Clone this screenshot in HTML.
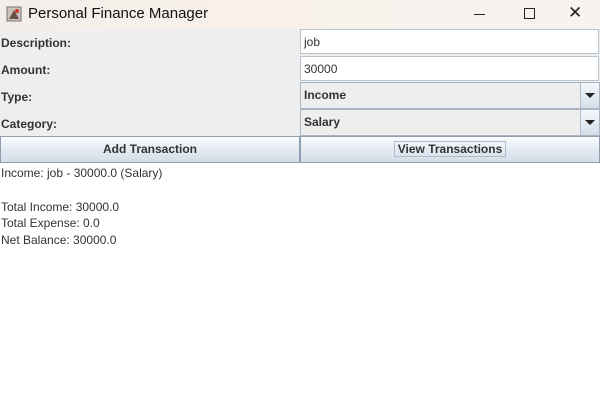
<!DOCTYPE html>
<html><head><style>
body{margin:0;width:600px;height:401px;overflow:hidden;background:#fff;font-family:"Liberation Sans",sans-serif;position:relative}
.a{position:absolute}
.tb{left:0;top:0;width:600px;height:29px;background:linear-gradient(90deg,#f3eeea,#f8f1ea 40%,#f6f3f0)}
.lab{font-weight:bold;font-size:12px;color:#333;left:1px}
.tf{background:#fff;border:1px solid #b8c4d0;left:300px;width:299px;font-size:12px;color:#333;box-sizing:border-box;padding-left:3px}
.cb{left:300px;width:300px;box-sizing:border-box;border:1px solid #a8b6c4;background:#eee;font-weight:bold;font-size:12px;color:#333}
.arr{position:absolute;right:0;top:0;width:18px;height:100%;background:linear-gradient(#f4f7fa,#d5dfe9);border-left:1px solid #b0bccb}
.arr:after{content:"";position:absolute;left:4px;top:10px;border:5px solid transparent;border-top:5px solid #222;border-bottom:0}
.btn{top:136px;height:27px;box-sizing:border-box;border:1px solid #8d9eb0;background:linear-gradient(#fbfcfd,#e4ebf2 50%,#d2dde8);font-weight:bold;font-size:12px;color:#333;text-align:center;line-height:25px}
.t{font-size:12px;color:#333;left:1px}
</style></head><body>
<div class="a tb"></div>
<svg class="a" style="left:6px;top:6px" width="16" height="16"><rect x="1" y="1" width="14" height="14" fill="#c9c2bd" stroke="#777"/><path d="M3 13 L8 4 L13 13Z" fill="#6b4f44"/><circle cx="11" cy="5" r="2" fill="#c33"/></svg>
<div class="a" style="left:28px;top:5px;font-size:15px;color:#111">Personal Finance Manager</div>
<div class="a" style="left:474px;top:14px;width:11px;height:1px;background:#222"></div>
<div class="a" style="left:524px;top:8px;width:9px;height:9px;border:1px solid #222"></div>
<div class="a" style="left:568px;top:3px;font-size:17px;color:#222">✕</div>
<div class="a" style="left:0;top:29px;width:300px;height:107px;background:#eeeeee"></div>
<div class="a" style="left:300px;top:29px;width:300px;height:107px;background:#eeeeee"></div>
<div class="a lab" style="top:36px">Description:</div>
<div class="a lab" style="top:63px">Amount:</div>
<div class="a lab" style="top:90px">Type:</div>
<div class="a lab" style="top:117px">Category:</div>
<div class="a tf" style="top:29px;height:25px;line-height:25px">job</div>
<div class="a tf" style="top:56px;height:25px;line-height:25px">30000</div>
<div class="a cb" style="top:82px;height:27px;line-height:25px;padding-left:3px">Income<div class="arr"></div></div>
<div class="a cb" style="top:109px;height:27px;line-height:25px;padding-left:3px">Salary<div class="arr"></div></div>
<div class="a btn" style="left:0;width:300px">Add Transaction</div>
<div class="a btn" style="left:300px;width:300px"><span style="border:1px solid #b0bccb;padding:0 3px">View Transactions</span></div>
<div class="a t" style="top:166px">Income: job - 30000.0 (Salary)</div>
<div class="a t" style="top:200px">Total Income: 30000.0</div>
<div class="a t" style="top:216px">Total Expense: 0.0</div>
<div class="a t" style="top:233px">Net Balance: 30000.0</div>
</body></html>
